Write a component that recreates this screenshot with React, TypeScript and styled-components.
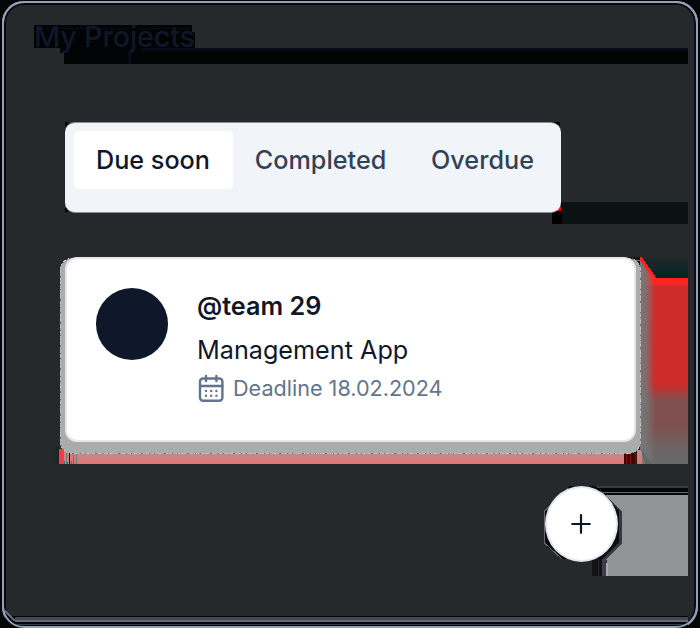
import React from 'react';
import styled, { createGlobalStyle } from 'styled-components';

const GlobalStyle = createGlobalStyle`
  * { box-sizing: border-box; }
  body { margin: 0; background: #08090c; font-family: Inter, sans-serif; }
`;

const Page = styled.main`
  position: relative;
  width: 700px;
  height: 628px;
  padding: 1px 2px 0;
  overflow: hidden;
  background: #050608;
`;

const Panel = styled.section`
  position: relative;
  height: 628px;
  border: 2px solid #94a0b8;
  border-radius: 22px;
  padding: 15px 0 0 30px;
  background: #25292b;
  box-shadow: inset 0 0 0 2px #0a0b10;
`;

const Title = styled.h1`
  position: relative;
  margin: 0;
  height: 38px;
  font-size: 28.8px;
  line-height: 38px;
  font-weight: 500;
  letter-spacing: -0.2px;
  color: #0f172a;
  white-space: nowrap;
`;

const Tabs = styled.nav`
  position: relative;
  display: flex;
  align-items: flex-start;
  width: 496px;
  height: 91px;
  margin: 66px 0 0 31px;
  padding: 9px;
  border-radius: 10px;
  background: #f1f5f9;
  border-top: 1px solid #8a8d91;
  border-bottom: 1px solid #8a8d91;
`;

const Tab = styled.button<{ $active?: boolean }>`
  height: 58px;
  margin-top: -1px;
  padding: 0 22.8px 0 22px;
  border: 0;
  border-radius: 5px;
  background: ${(p) => (p.$active ? '#fff' : 'transparent')};
  color: ${(p) => (p.$active ? '#0f172a' : '#334155')};
  font: 500 25.2px/58px Inter, sans-serif;
  white-space: nowrap;
`;

const Card = styled.article`
  position: relative;
  display: flex;
  width: 571px;
  height: 185px;
  margin: 44px 0 0 31px;
  padding: 29px 28px 29px 28.5px;
  gap: 29px;
  border: 2px solid #e5e7ec;
  border-radius: 12px;
  background: #fff;
`;

const Avatar = styled.div`
  flex: none;
  width: 72.5px;
  height: 72px;
  border-radius: 50%;
  background: #0f172a;
`;

const Details = styled.div`
  display: flex;
  flex-direction: column;
  white-space: nowrap;
`;

const Team = styled.strong`
  font-size: 25.2px;
  font-weight: 600;
  line-height: 36px;
  color: #0f172a;
`;

const Name = styled.span`
  margin-top: 8px;
  font-size: 25.2px;
  line-height: 36px;
  color: #0f172a;
`;

const Deadline = styled.span`
  display: flex;
  align-items: center;
  gap: 7px;
  margin-top: 6px;
  font-size: 21.6px;
  line-height: 29px;
  color: #64748b;
`;

const Footer = styled.footer`
  position: relative;
  display: flex;
  padding: 44px 0 0 510.5px;
`;

const AddButton = styled.button`
  display: grid;
  place-items: center;
  width: 73px;
  height: 76px;
  padding: 0;
  border: 2px solid #e2e8f0;
  border-radius: 50%;
  background: #fff;
  color: #0f172a;
`;

const Backdrop = styled.svg`
  position: absolute;
  left: 0;
  top: 0;
  pointer-events: none;
`;

const CalendarIcon = () => (
  <svg width="29" height="29" viewBox="0 0 29 29" fill="none" stroke="#64748b" strokeWidth="2.4" strokeLinecap="round">
    <rect x="3" y="4.5" width="22.4" height="22.3" rx="3" />
    <path d="M3 12h22.4M9 2v5M19.4 2v5" />
    <path d="M9 17h.01M14.2 17h.01M19.4 17h.01M9 21.7h.01M14.2 21.7h.01M19.4 21.7h.01" />
  </svg>
);

const PlusIcon = () => (
  <svg width="20" height="20" viewBox="0 0 20 20" fill="none" stroke="currentColor" strokeWidth="2.2" strokeLinecap="round">
    <path d="M1.2 10h17.6M10 1.2v17.6" />
  </svg>
);

const Shadows = () => (
  <Backdrop width="700" height="628" viewBox="0 0 700 628" shapeRendering="crispEdges">
    <defs>
      <linearGradient id="red" x1="0" y1="0" x2="0" y2="1">
        <stop offset="0" stopColor="#ff2423" />
        <stop offset=".025" stopColor="#ff2423" />
        <stop offset=".045" stopColor="#d02b2b" />
        <stop offset=".57" stopColor="#ce2b2a" />
        <stop offset=".66" stopColor="#805050" />
        <stop offset=".8" stopColor="#805050" />
        <stop offset=".92" stopColor="#6b6565" />
        <stop offset="1" stopColor="#686868" />
      </linearGradient>
      <linearGradient id="edge" x1="0" y1="0" x2="1" y2="0">
        <stop offset="0" stopColor="#777" />
        <stop offset=".4" stopColor="#777" stopOpacity=".85" />
        <stop offset="1" stopColor="#777" stopOpacity="0" />
      </linearGradient>
      <linearGradient id="teal" x1="0" y1="0" x2="0" y2="1">
        <stop offset="0" stopColor="#20282a" />
        <stop offset="1" stopColor="#022525" />
      </linearGradient>
      <linearGradient id="rose" x1="0" y1="0" x2="0" y2="1">
        <stop offset="0" stopColor="#b89090" />
        <stop offset="1" stopColor="#e27477" />
      </linearGradient>
      <linearGradient id="tealSide" x1="0" y1="0" x2="1" y2="0">
        <stop offset="0" stopColor="#25292b" />
        <stop offset="1" stopColor="#162424" />
      </linearGradient>
    </defs>
    <path fill="#020304" d="M34 25H192V32H195V48H688V64H64V53H60V48H34Z" />
    <path fill="#050b16" d="M141 48H688V51H141ZM128 51H131V64H128Z" />
    <path fill="none" stroke="#080d18" d="M40 28.500H130M140 28.500H192" />
    <path fill="#000" d="M552 122H560V126H552ZM65 122H68V126H65ZM65 208H68V212H65ZM552 202H562V224H552Z" />
    <path fill="#0c1114" d="M562 202H688V224H562Z" />
    <path fill="#f00" d="M556 207H561V211H556Z" />
    <path fill="url(#teal)" d="M640 257H688V279H655Z" />
    <path fill="url(#red)" d="M640 278H688V464H640Z" />
    <path fill="#ff2423" d="M640 256L656 278V282H640Z" />
    <path fill="url(#edge)" d="M640 260L655 282V464H640Z" />
    <path fill="none" stroke="#ff2423" strokeWidth="2" d="M640.500 257L656 279" />
    <path fill="url(#tealSide)" d="M54 447H60V464H54Z" />
    <path fill="url(#rose)" d="M59 450H642V464H59Z" />
    <path fill="#f43e42" d="M59 449H64V464H59Z" />
    <path stroke="#141010" d="M69.500 453V464" />
    <path stroke="#777" d="M66.500 453V464M73.500 454V464M76.500 454V464" />
    <path stroke="#008a8a" d="M64.500 461V464M67.500 462V464M71.500 461V464M73.500 458V464" />
    <path fill="#3a0606" d="M624 450H637V464H624Z" />
    <path stroke="#850b0d" d="M626.500 450V464M630.500 450V464M635.500 450V464" />
    <path fill="#656565" d="M641 449L652 464H645Z" />
    <path fill="#101113" d="M626 257H640V266H626Z" />
    <path stroke="#777" d="M630 260.500H640" />
    <rect x="60" y="258" width="581" height="196" rx="13" fill="#ababab" />
    <rect x="60" y="258" width="580.500" height="195.500" rx="13" fill="none" stroke="#c4c4c4" strokeDasharray="2 1 1 3 3 2" />
    <rect x="60" y="258" width="580.500" height="195.500" rx="13" fill="none" stroke="#6d6e6f" strokeDasharray="1 6 2 9 1 4" />
    <path fill="#3a3b3d" d="M590 486H688V488H590Z" />
    <path fill="#050607" d="M590 488H688V495H590Z" />
    <path stroke="#69696c" d="M600 492.500H688" />
    <path fill="#929396" d="M602 495H688V576H607V560H602Z" />
    <path fill="#111216" d="M592 558H602V576H592Z" />
    <path fill="#3e3d48" d="M602 558H606V576H602Z" />
    <path fill="#aaa9ad" d="M606 563H608V576H606Z" />
    <path stroke="#292a2e" d="M598.500 558V576" />
    <path fill="#37373d" d="M600 490L622 511V543L606 559H590V490Z" />
    <path fill="#0b0d10" d="M570 486H596L619 511V542L602 559H562L544 544V509Z" />
    <path fill="none" stroke="#69696e" d="M562 559L544.500 543V511L568 488" />
    <path fill="#060708" d="M5 611L9 616H688V628H12L5 621Z" />
    <path fill="#44464f" d="M15 617H688V620H15Z" />
    <path fill="#626b74" d="M15 620H688V622H15Z" />
    <path fill="#313c45" d="M15 624H688V625H15Z" />
    <path fill="none" stroke="#626b74" strokeWidth="2" d="M5 611L15 621" />
  </Backdrop>
);

const ShadowLayer = styled.div`
  position: absolute;
  left: -4px;
  top: -3px;
`;

const Frame = styled.div`
  position: absolute;
  inset: 1px 2px 0;
  border: 2px solid #94a0b8;
  border-radius: 22px;
  pointer-events: none;
`;

export default function App() {
  return (
    <>
      <GlobalStyle />
      <Page>
        <Panel>
          <ShadowLayer><Shadows /></ShadowLayer>
          <Title>My Projects</Title>
          <Tabs>
            <Tab $active>Due soon</Tab>
            <Tab>Completed</Tab>
            <Tab>Overdue</Tab>
          </Tabs>
          <Card>
            <Avatar />
            <Details>
              <Team>@team 29</Team>
              <Name>Management App</Name>
              <Deadline><CalendarIcon />Deadline 18.02.2024</Deadline>
            </Details>
          </Card>
          <Footer>
            <AddButton aria-label="Add project"><PlusIcon /></AddButton>
          </Footer>
        </Panel>
        <Frame />
      </Page>
    </>
  );
}
